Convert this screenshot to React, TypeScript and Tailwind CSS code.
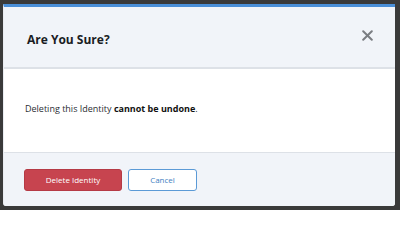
import React from "react";

const App: React.FC = () => {
  return (
    <div className="w-[400px] h-[210px] bg-[#3a3a3a] pt-[4px] pl-[3px] pr-[5px] pb-[4px] font-['Open_Sans',sans-serif]">
      <div className="h-full flex flex-col bg-white border-t-[3px] border-l border-l-[#e9ecf1] border-t-[#4a8fd8] rounded-b-[3px] overflow-hidden">
        <div className="h-[62px] bg-[#f1f4f9] border-b-2 border-[#dde1e7] flex items-center justify-between pl-[23px] pr-[22px] pt-[6px]">
          <h3 className="text-[12px] font-bold text-[#1a1d24]">Are You Sure?</h3>
          <button className="text-[#7a7d82] mb-[10px]">
            <svg width="11" height="11" viewBox="0 0 11 11">
              <path d="M1.2 1.2 L9.8 9.8 M9.8 1.2 L1.2 9.8" stroke="currentColor" strokeWidth="2" strokeLinecap="round" />
            </svg>
          </button>
        </div>
        <div className="h-[83px] flex items-center pl-[21px] pb-[3px]">
          <p className="text-[9px] text-[#2b2e33]">
            Deleting this Identity <strong className="font-bold text-[#111]">cannot be undone</strong>.
          </p>
        </div>
        <div className="flex-1 bg-[#f1f4f9] border-t border-[#dde1e7] flex items-center gap-[6px] pl-[20px]">
          <button className="w-[98px] h-[22px] rounded-[3px] bg-[#c7444f] border border-[#b53a45] text-white text-[8px]">
            Delete Identity
          </button>
          <button className="w-[69px] h-[22px] rounded-[3px] bg-white border border-[#5b9ad6] text-[#3f7fc2] text-[8px]">
            Cancel
          </button>
        </div>
      </div>
    </div>
  );
};

export default App;
